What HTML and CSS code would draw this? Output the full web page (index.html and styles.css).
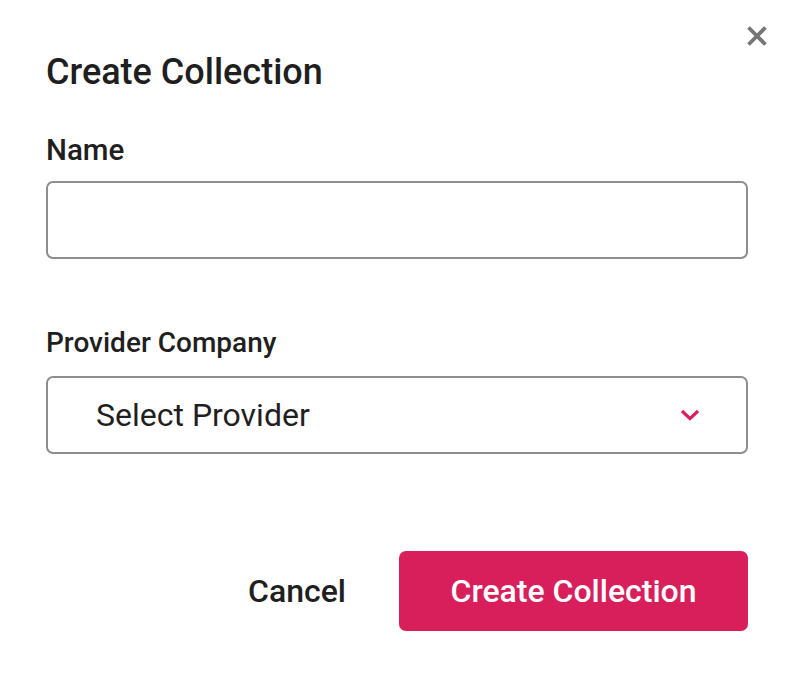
FILE: index.html
```html
<!DOCTYPE html>
<html>
<head>
<meta charset="utf-8">
<link rel="stylesheet" href="styles.css">
</head>
<body>
<div class="dialog">
  <button class="close" aria-label="Close">
    <svg width="22" height="22" viewBox="0 0 22 22"><path d="M2.5 2.5 L19.5 19.5 M19.5 2.5 L2.5 19.5" stroke="#767676" stroke-width="3.8" stroke-linecap="butt"/></svg>
  </button>
  <h1 class="title">Create Collection</h1>
  <div class="field">
    <label class="label">Name</label>
    <div class="input"></div>
  </div>
  <div class="field field-provider">
    <label class="label label-provider">Provider Company</label>
    <div class="select">
      <span class="select-text">Select Provider</span>
      <svg class="chev" width="20" height="12" viewBox="0 0 20 12"><path d="M2 2 L10 9.6 L18 2" fill="none" stroke="#d81f5c" stroke-width="3.2"/></svg>
    </div>
  </div>
  <div class="actions">
    <button class="cancel">Cancel</button>
    <button class="primary">Create Collection</button>
  </div>
</div>
</body>
</html>
```
FILE: styles.css
```css
* { box-sizing: border-box; }
html, body { margin: 0; padding: 0; background: #fff; }
body { font-family: Roboto, "Noto Sans", sans-serif; color: #1f1f1f; }
.dialog {
  position: relative;
  width: 792px;
  height: 678px;
  padding: 50px 44px 0 46px;
}
.close {
  position: absolute;
  top: 25px;
  left: 746px;
  padding: 0;
  border: 0;
  background: none;
  width: 22px;
  height: 22px;
  cursor: pointer;
}
.close svg { display: block; }
.title {
  margin: 0;
  font-size: 36px;
  font-weight: 500;
  line-height: 44px;
}
.field { margin-top: 38px; }
.field-provider { margin-top: 66px; }
.label {
  display: block;
  font-size: 29.5px;
  font-weight: 500;
  line-height: 36px;
}
.label-provider { font-size: 28px; }
.input, .select {
  margin-top: 13px;
  height: 78px;
  border: 2px solid #8e8e8e;
  border-radius: 7px;
}
.field-provider .select { margin-top: 15px; }
.select {
  display: flex;
  align-items: center;
  justify-content: space-between;
  padding: 0 46px 0 48px;
}
.select-text { font-size: 32px; font-weight: 400; line-height: 38px; color: #1f1f1f; }
.chev { display: block; }
.actions {
  margin-top: 97px;
  display: flex;
  justify-content: flex-end;
  align-items: center;
  gap: 53px;
}
.cancel {
  border: 0;
  background: none;
  padding: 0;
  font-family: inherit;
  font-size: 32px;
  font-weight: 500;
  color: #1f1f1f;
}
.primary {
  width: 349px;
  height: 80px;
  border: 0;
  border-radius: 7px;
  background: #d81f5c;
  color: #fff;
  font-family: inherit;
  font-size: 32px;
  font-weight: 500;
}
```
